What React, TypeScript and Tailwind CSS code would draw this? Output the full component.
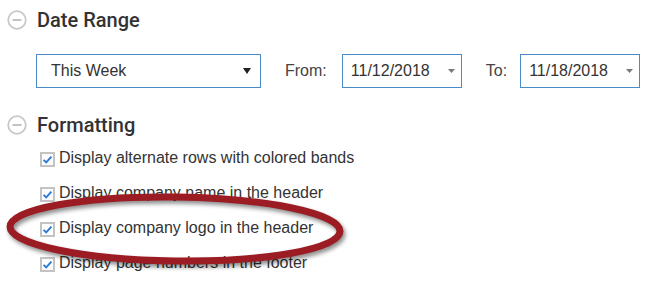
import React from 'react';

const CollapseIcon: React.FC = () => (
  <svg width="20" height="20" viewBox="0 0 20 20" className="shrink-0">
    <circle cx="10" cy="10" r="8.8" fill="none" stroke="#c8c8c8" strokeWidth="1.8" />
    <line x1="5.5" y1="10" x2="14.5" y2="10" stroke="#b4b4b4" strokeWidth="1.6" />
  </svg>
);

const Check: React.FC = () => (
  <svg width="15" height="15" viewBox="0 0 15 15" className="shrink-0 mt-[3px]">
    <rect x="1" y="1" width="13" height="13" fill="#fdfdfd" stroke="#c3c3c3" strokeWidth="2" />
    <path d="M3.6 7.8 L6.2 10.4 L11.4 4.6" fill="none" stroke="#2c7ad6" strokeWidth="1.9" />
  </svg>
);

const SectionHeader: React.FC<{ title: string; className?: string }> = ({ title, className }) => (
  <div className={`flex items-center h-[20px] pl-[7px] ${className ?? ''}`}>
    <CollapseIcon />
    <span className="ml-[10px] text-[20px] leading-[20px] font-medium text-[#333] font-['Roboto',sans-serif]">
      {title}
    </span>
  </div>
);

const DateBox: React.FC<{ value: string }> = ({ value }) => (
  <div className="w-[120px] h-[34px] border border-[#4a8cc9] flex items-center justify-between pl-[8px] pr-[6px]">
    <span className="text-[16px] text-[#333]">{value}</span>
    <svg width="7" height="4" viewBox="0 0 7 4">
      <path d="M0 0 H7 L3.5 4 Z" fill="#7a7a7a" />
    </svg>
  </div>
);

const options = [
  'Display alternate rows with colored bands',
  'Display company name in the header',
  'Display company logo in the header',
  'Display page numbers in the footer',
];

export default function App() {
  return (
    <div className="relative w-[654px] h-[289px] bg-white overflow-hidden font-['Liberation_Sans',Arial,sans-serif]">
      <SectionHeader title="Date Range" className="pt-[10px] h-[30px] box-border" />

      <div className="flex items-center mt-[24px] pl-[36px]">
        <div className="w-[225px] h-[34px] border border-[#4a8cc9] flex items-center justify-between pl-[14px] pr-[9px]">
          <span className="text-[16px] text-[#333]">This Week</span>
          <svg width="8" height="6" viewBox="0 0 8 6">
            <path d="M0 0 H8 L4 6 Z" fill="#222" />
          </svg>
        </div>
        <span className="ml-[24px] mr-[15px] text-[16px] text-[#444]">From:</span>
        <DateBox value="11/12/2018" />
        <span className="ml-[24px] mr-[13px] text-[16px] text-[#444]">To:</span>
        <DateBox value="11/18/2018" />
      </div>

      <SectionHeader title="Formatting" className="mt-[27px]" />

      <div className="mt-[5px] pl-[40px]">
        {options.map((o) => (
          <div key={o} className="flex items-center h-[35px]">
            <Check />
            <span className="ml-[4px] text-[16px] leading-[35px] text-[#333]">{o}</span>
          </div>
        ))}
      </div>

      <svg
        className="absolute left-0 top-0 pointer-events-none"
        width="654"
        height="289"
        style={{ filter: 'drop-shadow(2px 3px 2px rgba(0,0,0,0.45))' }}
      >
        <ellipse
          cx="175"
          cy="229"
          rx="165"
          ry="32"
          fill="none"
          stroke="#9c1c24"
          strokeWidth="7"
          transform="rotate(0.8 175 229)"
        />
      </svg>
    </div>
  );
}
